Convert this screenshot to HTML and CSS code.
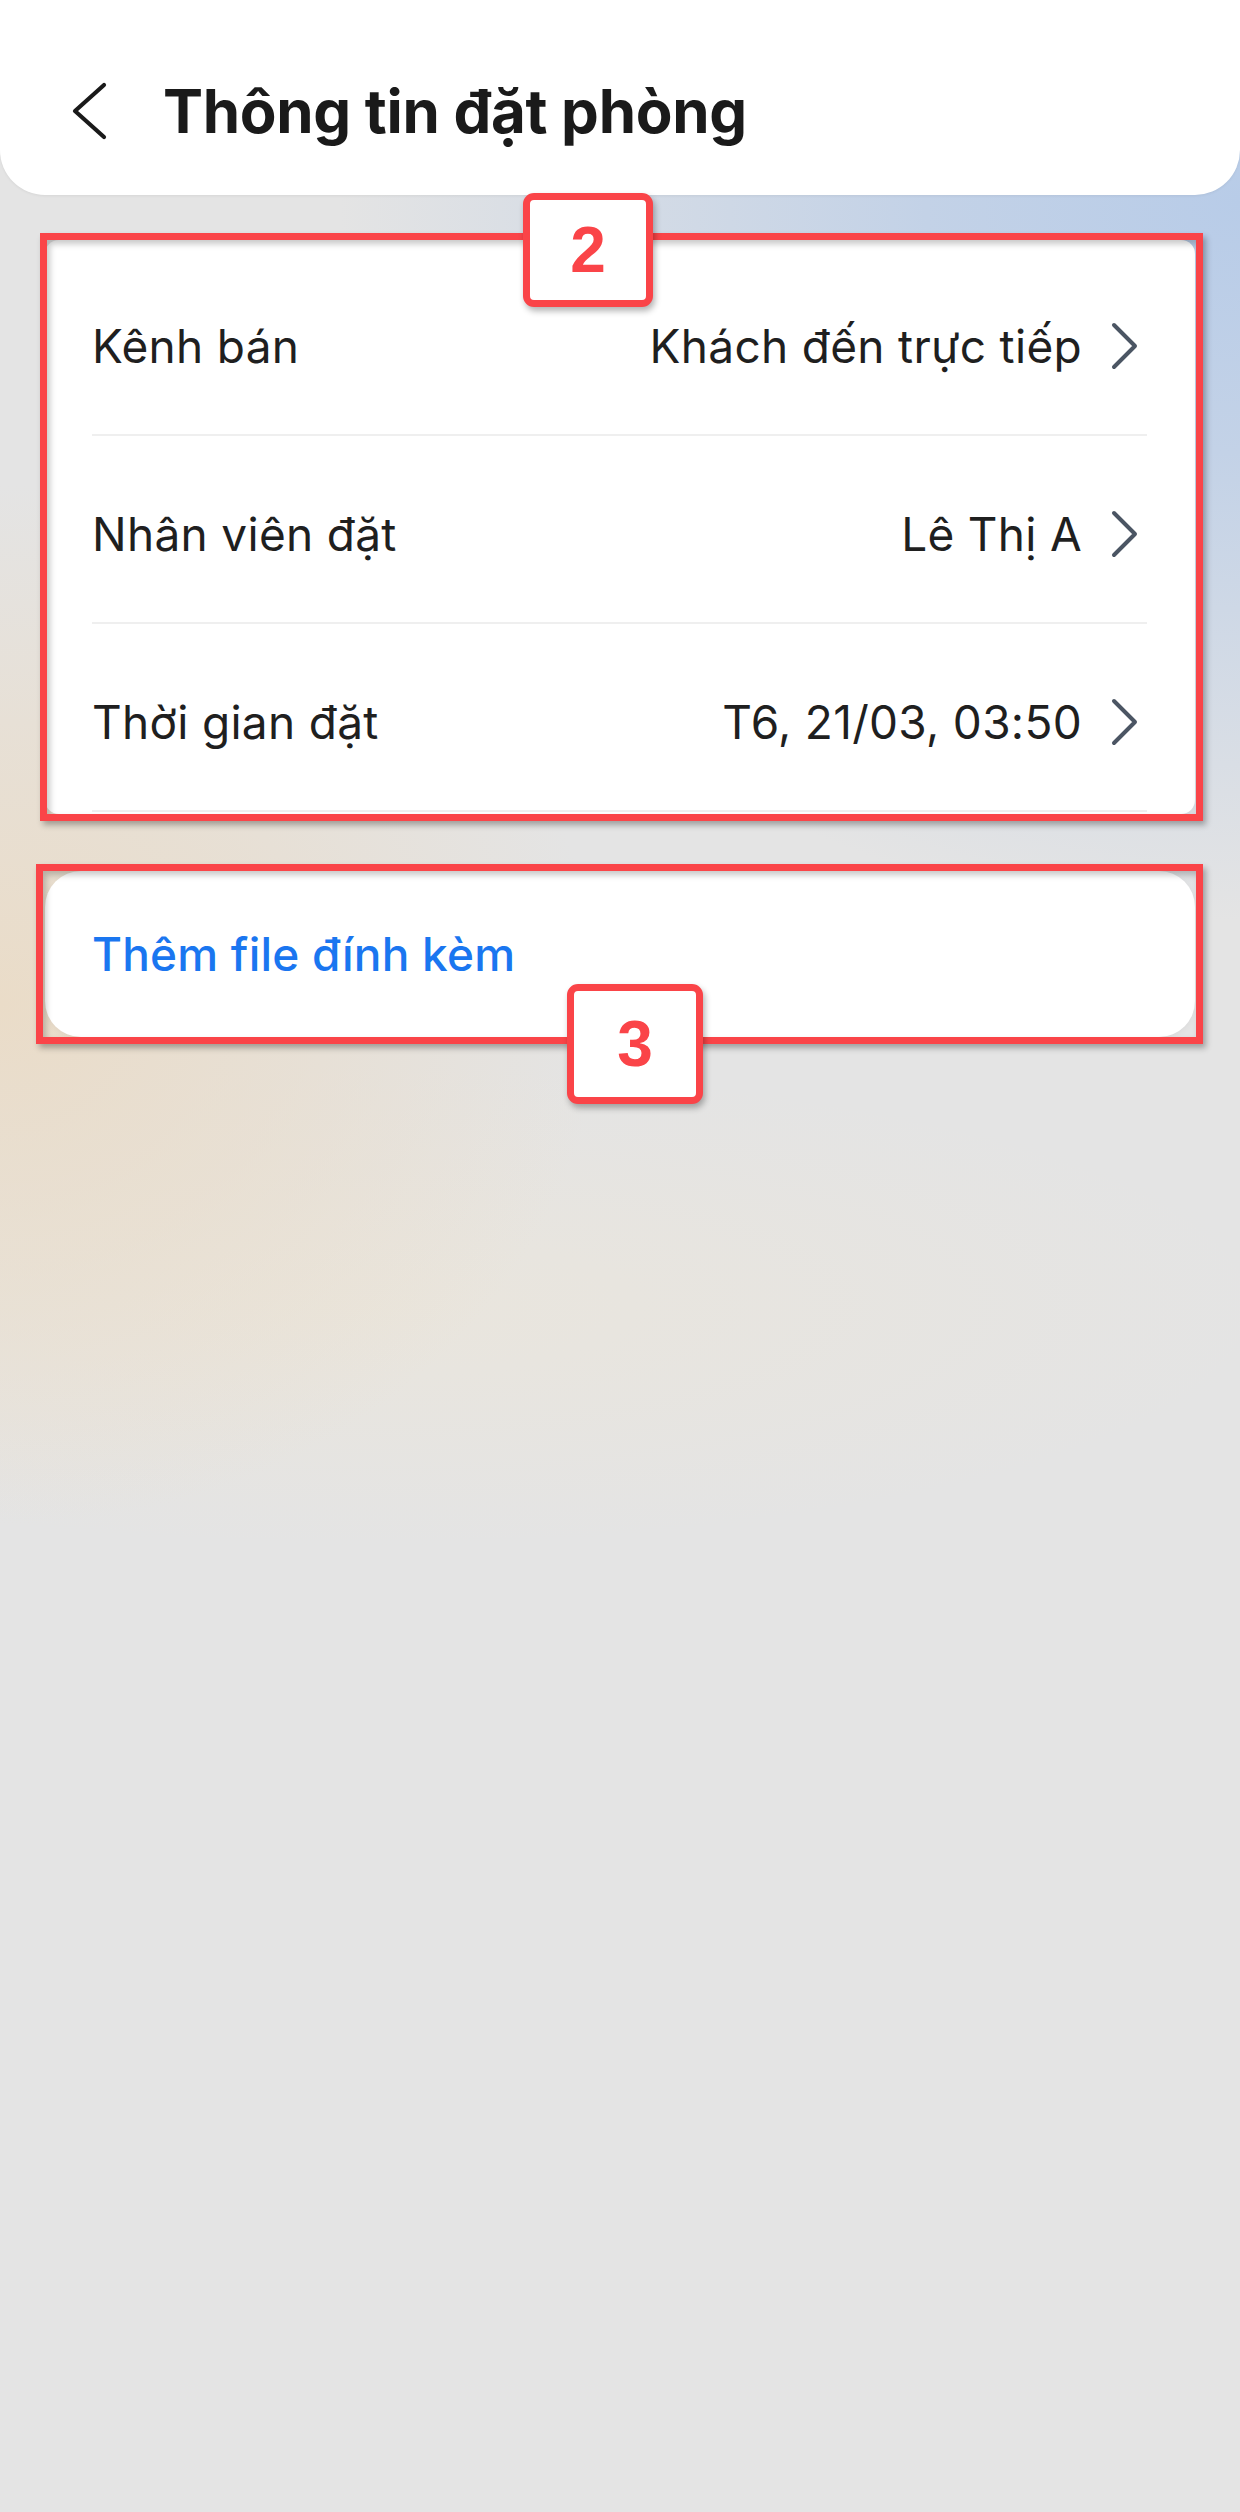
FILE: index.html
```html
<!DOCTYPE html>
<html lang="vi">
<head>
    <meta charset="UTF-8">
    <meta name="viewport" content="width=device-width, initial-scale=1.0">
    <title>Thông tin đặt phòng</title>
    <link rel="stylesheet" href="styles.css">
</head>
<body>
    <div class="screen">
        <header class="topbar">
            <button class="back-btn" aria-label="Quay lại">
                <svg width="40" height="64" viewBox="0 0 40 64">
                    <path d="M32 6 L3 32 L32 58" fill="none" stroke="#1a1a1a" stroke-width="4.2" stroke-linecap="round" stroke-linejoin="round"/>
                </svg>
            </button>
            <h1 class="page-title">Thông tin đặt phòng</h1>
        </header>

        <main class="content">
            <section class="card info-card">
                <div class="row">
                    <span class="row-label">Kênh bán</span>
                    <span class="row-value">Khách đến trực tiếp</span>
                    <svg class="row-arrow" width="36" height="48" viewBox="0 0 36 48">
                        <path d="M3 3 L24 24 L3 45" fill="none" stroke="#4b5563" stroke-width="4" stroke-linecap="round" stroke-linejoin="round"/>
                    </svg>
                </div>
                <div class="row">
                    <span class="row-label">Nhân viên đặt</span>
                    <span class="row-value">Lê Thị A</span>
                    <svg class="row-arrow" width="36" height="48" viewBox="0 0 36 48">
                        <path d="M3 3 L24 24 L3 45" fill="none" stroke="#4b5563" stroke-width="4" stroke-linecap="round" stroke-linejoin="round"/>
                    </svg>
                </div>
                <div class="row">
                    <span class="row-label">Thời gian đặt</span>
                    <span class="row-value">T6, 21/03, 03:50</span>
                    <svg class="row-arrow" width="36" height="48" viewBox="0 0 36 48">
                        <path d="M3 3 L24 24 L3 45" fill="none" stroke="#4b5563" stroke-width="4" stroke-linecap="round" stroke-linejoin="round"/>
                    </svg>
                </div>
                <div class="annot annot-info">
                    <span class="badge badge-2">2</span>
                </div>
            </section>

            <section class="card attach-card">
                <a class="attach-link" href="#">Thêm file đính kèm</a>
                <div class="annot annot-attach">
                    <span class="badge badge-3">3</span>
                </div>
            </section>
        </main>
    </div>
</body>
</html>
```

FILE: styles.css
```css
* {
    margin: 0;
    padding: 0;
    box-sizing: border-box;
}

body {
    font-family: Inter, 'Noto Sans', sans-serif;
    background-color: #e4e4e4;
    background-image:
        radial-gradient(ellipse 900px 720px at 100% 8%, rgba(184, 204, 232, 1) 0%, rgba(184, 204, 232, 0.75) 35%, rgba(184, 204, 232, 0) 100%),
        radial-gradient(ellipse 600px 520px at 0% 40%, rgba(234, 220, 200, 1) 0%, rgba(234, 220, 200, 0.55) 50%, rgba(234, 220, 200, 0) 100%),
        radial-gradient(ellipse 900px 240px at 30% 52%, rgba(236, 230, 218, 0.7) 0%, rgba(236, 230, 218, 0) 100%);
    background-repeat: no-repeat;
    min-height: 2512px;
    color: #1f1f1f;
}

.screen {
    min-height: 2512px;
}

.topbar {
    height: 195px;
    background: white;
    border-radius: 0 0 45px 45px;
    box-shadow: 0 1px 3px rgba(0,0,0,0.06);
    display: flex;
    align-items: center;
    padding: 26px 0 0 72px;
}

.back-btn {
    background: none;
    border: none;
    display: flex;
    cursor: pointer;
}

.page-title {
    margin-left: 51px;
    font-size: 60px;
    font-weight: 700;
    line-height: 1;
    color: #1a1a1a;
    letter-spacing: -0.3px;
}

.content {
    padding: 45px 45px 0;
}

.card {
    position: relative;
    background: white;
    box-shadow: 0 2px 6px rgba(0,0,0,0.04);
}

.info-card {
    border-radius: 14px;
    padding: 8px 48px 2px 47px;
}

.row {
    height: 188px;
    display: flex;
    align-items: center;
    padding-top: 10px;
    border-bottom: 2px solid #efefef;
}

.row:last-child {
    border-bottom: none;
    height: 187px;
}

.row-label {
    flex: 1;
    font-size: 46px;
    line-height: 1;
    letter-spacing: 0.3px;
    color: #1f1f1f;
}

.row-value {
    font-size: 46px;
    line-height: 1;
    letter-spacing: 0.3px;
    color: #1f1f1f;
    margin-right: 29px;
}

.row-arrow {
    flex-shrink: 0;
}

.attach-card {
    margin-top: 57px;
    height: 166px;
    border-radius: 36px;
    display: flex;
    align-items: center;
    padding-left: 47px;
}

.attach-link {
    font-size: 46px;
    line-height: 1;
    font-weight: 500;
    letter-spacing: 0.2px;
    color: #1a76f0;
    text-decoration: none;
}

/* annotation overlays */
.annot {
    position: absolute;
    border: 7px solid #fa4448;
    box-shadow: 3px 4px 6px rgba(0,0,0,0.3), inset 3px 4px 6px rgba(0,0,0,0.22);
    pointer-events: none;
}

.annot-info {
    top: -7px;
    bottom: -7px;
    left: -5px;
    right: -8px;
}

.annot-attach {
    top: -7px;
    bottom: -7px;
    left: -9px;
    right: -8px;
}

.badge {
    position: absolute;
    display: flex;
    align-items: center;
    justify-content: center;
    background: white;
    border: 7px solid #fa4448;
    border-radius: 11px;
    box-shadow: 2px 4px 6px rgba(0,0,0,0.3);
    font-family: 'Liberation Sans', Arial, sans-serif;
    font-weight: 700;
    font-size: 64px;
    line-height: 1;
    color: #fa4448;
    z-index: 2;
}

.badge-2 {
    left: 476px;
    top: -47px;
    width: 130px;
    height: 114px;
}

.badge-3 {
    left: 524px;
    top: 113px;
    width: 136px;
    height: 120px;
}
```
